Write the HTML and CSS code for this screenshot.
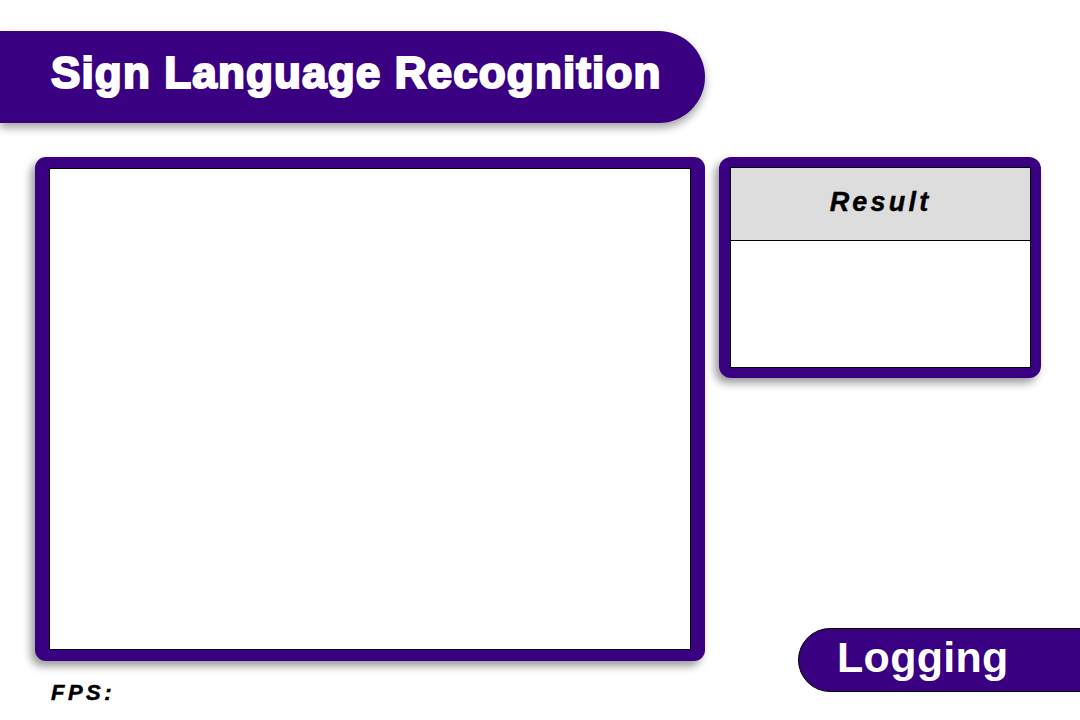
FILE: index.html
```html
<!DOCTYPE html>
<html>
<head>
<meta charset="utf-8">
<link rel="stylesheet" href="styles.css">
</head>
<body>
<header class="title-bar">
  <h1 class="title">Sign Language Recognition</h1>
</header>
<main class="layout">
  <section class="left-col">
    <div class="video-panel">
      <div class="video"></div>
    </div>
    <div class="fps">FPS:</div>
  </section>
  <section class="right-col">
    <div class="result-panel">
      <div class="result-box">
        <div class="result-head">Result</div>
        <div class="result-body"></div>
      </div>
    </div>
    <div class="logging">Logging</div>
  </section>
</main>
</body>
</html>
```

FILE: styles.css
```css
html, body {
  margin: 0;
  padding: 0;
  width: 1080px;
  height: 720px;
  overflow: hidden;
  background: #ffffff;
  font-family: "Liberation Sans", Arial, sans-serif;
}

.title-bar {
  margin-top: 31px;
  width: 705px;
  height: 92px;
  box-sizing: border-box;
  background: #3a0082;
  border-radius: 0 46px 46px 0;
  padding: 20px 0 0 51px;
  box-shadow: 0 5px 8px rgba(0, 0, 0, 0.35);
}

.title {
  margin: 0;
  color: #ffffff;
  font-size: 44px;
  line-height: 44px;
  font-weight: 700;
  letter-spacing: 1.15px;
  -webkit-text-stroke: 2.2px #ffffff;
  white-space: nowrap;
}

.layout {
  display: flex;
  margin-top: 34px;
  padding-left: 35px;
  gap: 14px;
}

.left-col {
  display: flex;
  flex-direction: column;
}

.video-panel {
  width: 670px;
  height: 504px;
  box-sizing: border-box;
  padding: 11px 14px;
  background: #3a0082;
  border-radius: 11px;
  box-shadow: -4px 5px 8px rgba(0, 0, 0, 0.4);
}

.video {
  width: 640px;
  height: 480px;
  background: #ffffff;
  border: 1px solid #000000;
}

.fps {
  margin: 21px 0 0 16px;
  font-size: 22px;
  line-height: 22px;
  font-weight: 700;
  font-style: italic;
  letter-spacing: 3.5px;
  -webkit-text-stroke: 0.5px #000000;
  color: #000000;
}

.right-col {
  display: flex;
  flex-direction: column;
}

.result-panel {
  width: 322px;
  height: 221px;
  box-sizing: border-box;
  padding: 10px 10px 10px 11px;
  background: #3a0082;
  border-radius: 12px;
  box-shadow: -4px 5px 8px rgba(0, 0, 0, 0.4);
}

.result-box {
  height: 201px;
  box-sizing: border-box;
  border: 1px solid #000000;
  background: #ffffff;
  display: flex;
  flex-direction: column;
}

.result-head {
  height: 73px;
  box-sizing: border-box;
  background: #dddddd;
  border-bottom: 1px solid #000000;
  display: flex;
  align-items: center;
  justify-content: center;
  padding: 0 0 4px 0;
  font-size: 27px;
  font-weight: 700;
  font-style: italic;
  letter-spacing: 3.2px;
  -webkit-text-stroke: 0.4px #000000;
  color: #000000;
}

.result-body {
  flex: 1;
}

.logging {
  margin: 250px 0 0 79px;
  width: 320px;
  height: 64px;
  box-sizing: border-box;
  background: #3a0082;
  border: 1px solid #000000;
  border-radius: 32px 0 0 32px;
  display: flex;
  align-items: center;
  padding: 0 0 6px 38px;
  color: #ffffff;
  font-size: 43px;
  font-weight: 700;
  letter-spacing: 0.3px;
}
```
